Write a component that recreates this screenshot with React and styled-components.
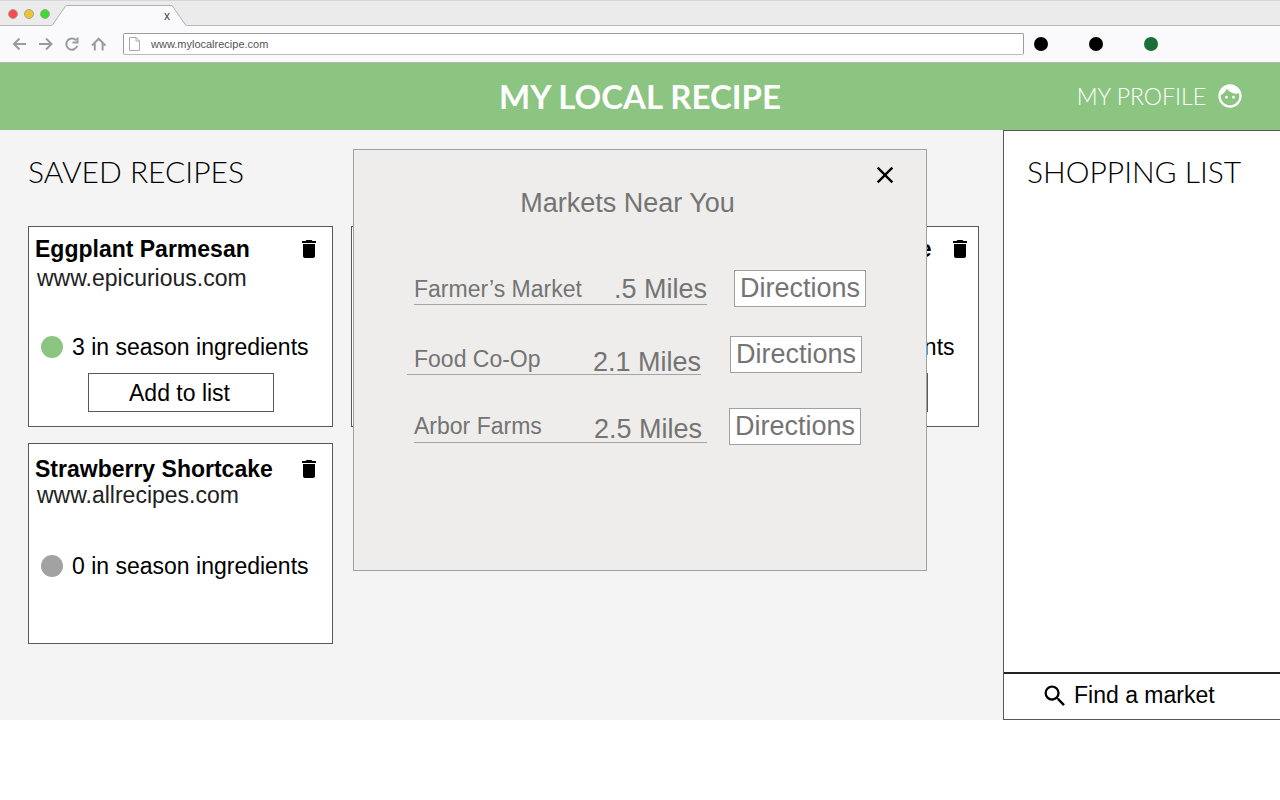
import React from "react";
import styled, { createGlobalStyle } from "styled-components";
import { MdClose, MdDelete, MdSearch } from "react-icons/md";

const GlobalStyle = createGlobalStyle`
  *, *::before, *::after { box-sizing: border-box; }
  body {
    margin: 0;
    background: #fff;
    color: #000;
    font-family: "Liberation Sans", Arial, sans-serif;
    font-size: 23px;
  }
  button, input { font: inherit; color: inherit; }
  h1, h2, h3, p, ul { margin: 0; padding: 0; }
`;

const PlainButton = styled.button`
  display: flex;
  align-items: center;
  justify-content: center;
  padding: 0;
  border: 0;
  background: none;
  cursor: pointer;
`;

/* Browser window */

const TabStrip = styled.div`
  display: flex;
  align-items: flex-end;
  height: 26px;
  padding-left: 8px;
  background: #ebebeb;
  border-top: 1px solid #d3d6da;
  box-shadow: inset 0 -1px #b9b9b9;
`;

const WindowButtons = styled.div`
  display: flex;
  gap: 6px;
  align-self: center;
  width: 44px;
`;

const WindowButton = styled.span`
  width: 10px;
  height: 10px;
  flex: none;
  border: 1px solid #a9a597;
  border-radius: 50%;
  background: ${(p) => p.$color};
`;

const Tab = styled.div`
  position: relative;
  display: flex;
  justify-content: flex-end;
  align-items: center;
  width: 134px;
  height: 21px;
  padding-right: 14px;
`;

const TabShape = styled.svg`
  position: absolute;
  inset: 0;
`;

const TabClose = styled(PlainButton)`
  position: relative;
  width: 10px;
  height: 20px;
  color: #444;
  font-size: 12px;
  line-height: 20px;
`;

const Toolbar = styled.div`
  display: flex;
  align-items: center;
  height: 37px;
  padding-left: 12px;
  background: #fafafc;
  border-bottom: 1px solid #b4b8b4;
`;

const NavButtons = styled.nav`
  display: flex;
  gap: 10px;
  width: 111px;
`;

const NavButton = styled(PlainButton)`
  width: 16px;
  height: 16px;
  color: #999c9c;
`;

const AddressBar = styled.label`
  display: flex;
  flex: 1;
  align-items: center;
  gap: 11px;
  height: 22px;
  padding-left: 5px;
  background: #fff;
  border: 1px solid #9c9c9f;
  border-bottom-color: #bbb;
  border-radius: 2px;
`;

const AddressInput = styled.input`
  flex: 1;
  min-width: 0;
  padding: 0;
  border: 0;
  outline: 0;
  background: none;
  color: #555;
  font-size: 11px;
  line-height: 20px;
`;

const Extensions = styled.div`
  display: flex;
  justify-content: space-between;
  width: 256px;
  padding: 0 122px 0 10px;
`;

const ExtensionDot = styled.span`
  width: 14px;
  height: 14px;
  border-radius: 50%;
  background: ${(p) => p.$color};
`;

/* Page */

const Header = styled.header`
  display: grid;
  grid-template-columns: 1fr auto 1fr;
  align-items: center;
  height: 67px;
  padding: 0 36px 1px;
  background: #8cc482;
  color: #fff;
  font-family: Lato, sans-serif;
`;

const SiteTitle = styled.h1`
  grid-column: 2;
  font-size: 33px;
  font-weight: 700;
  line-height: 40px;
`;

const ProfileLink = styled.a`
  display: flex;
  justify-self: end;
  align-items: center;
  gap: 10px;
  color: inherit;
  font-size: 23px;
  font-weight: 300;
  text-decoration: none;
`;

const Body = styled.div`
  position: relative;
  display: flex;
  min-height: 590px;
`;

const Recipes = styled.main`
  flex: 1;
  min-width: 0;
  padding: 23px 24px 76px 28px;
  background: #f4f4f4;
`;

const SectionTitle = styled.h2`
  font-family: Lato, sans-serif;
  font-size: 30px;
  font-weight: 300;
  line-height: 36px;
`;

const CardGrid = styled.div`
  display: grid;
  grid-template-columns: repeat(3, minmax(0, 1fr));
  gap: 16px 18px;
  margin-top: 37px;
`;

const Card = styled.article`
  min-height: 201px;
  padding: ${(p) => (p.$compact ? 11 : 8)}px 6px 14px;
  background: #fff;
  border: 1px solid #595959;
`;

const CardHead = styled.div`
  display: flex;
  justify-content: space-between;
  align-items: center;
  padding-right: ${(p) => (p.$wide ? 0 : 5)}px;
`;

const RecipeName = styled.h3`
  font-size: 23px;
  line-height: 28px;
  white-space: nowrap;
`;

const DeleteButton = styled(PlainButton)`
  width: 24px;
  height: 24px;
`;

const Source = styled.a`
  display: block;
  padding-left: 2px;
  color: #222;
  line-height: ${(p) => (p.$compact ? 24 : 30)}px;
  text-decoration: none;
`;

const Season = styled.p`
  display: flex;
  align-items: center;
  gap: 9px;
  margin-top: ${(p) => (p.$compact ? 45 : 40)}px;
  padding-left: 6px;
  line-height: 28px;
  white-space: nowrap;
`;

const SeasonDot = styled.span`
  flex: none;
  width: 22px;
  height: 22px;
  border-radius: 50%;
  background: ${(p) => (p.$active ? "#8cc482" : "#a2a2a2")};
`;

const AddButton = styled(PlainButton)`
  width: ${(p) => (p.$wide ? 203 : 186)}px;
  height: 39px;
  margin: 12px auto 0;
  padding: 2px 2px 0 0;
  background: #fff;
  border: 1px solid #595959;
`;

const Sidebar = styled.aside`
  display: flex;
  flex-direction: column;
  width: 277px;
  background: #fff;
  border: 1px solid #595959;
  border-right: 0;
`;

const ShoppingList = styled.section`
  flex: 1;
  padding: 22px 23px;
`;

const FindMarket = styled(PlainButton)`
  justify-content: flex-start;
  gap: 5px;
  height: 47px;
  padding: 0 0 2px 37px;
  border-top: 2px solid #222;
`;

/* Markets dialog */

const Overlay = styled.div`
  position: absolute;
  inset: 0;
  display: flex;
  justify-content: center;
  align-items: flex-start;
  padding-top: 19px;
`;

const Dialog = styled.section`
  width: 574px;
  min-height: 422px;
  padding: 11px 27px 32px 60px;
  background: #eeedeb;
  border: 1px solid #a0a0a0;
  color: #747474;
`;

const CloseButton = styled(PlainButton)`
  width: 28px;
  height: 28px;
  margin-left: auto;
  color: #000;
`;

const DialogTitle = styled.h2`
  padding-right: 58px;
  font-size: 27px;
  font-weight: 400;
  line-height: 28px;
  text-align: center;
`;

const MarketList = styled.ul`
  padding-top: 53px;
  list-style: none;
`;

const MarketRow = styled.li`
  display: flex;
  align-items: flex-start;
  gap: ${(p) => p.$gap}px;
  margin-left: ${(p) => (p.$outdent ? -7 : 0)}px;
  margin-bottom: ${(p) => p.$space}px;
`;

const MarketLine = styled.div`
  display: flex;
  justify-content: space-between;
  width: ${(p) => (p.$outdent ? 294 : 293)}px;
  height: ${(p) => (p.$outdent ? 39 : 35)}px;
  padding-left: ${(p) => (p.$outdent ? 7 : 0)}px;
  padding-top: ${(p) => p.$top}px;
  border-bottom: 1px solid #a4a4a4;
`;

const MarketName = styled.span`
  line-height: 28px;
`;

const Distance = styled.span`
  padding-right: ${(p) => (p.$inset ? 5 : 0)}px;
  font-size: 27px;
  line-height: ${(p) => (p.$low ? 34 : 28)}px;
`;

const Directions = styled(PlainButton)`
  width: 132px;
  height: 37px;
  background: #fff;
  border: 1px solid #a0a0a0;
  font-size: 27px;
  line-height: 35px;
`;

const recipes = [
  { name: "Eggplant Parmesan", source: "www.epicurious.com", count: 3 },
  { name: "Caprese Salad", source: "www.epicurious.com", count: 2 },
  { name: "Chocolate Cheesecake", source: "www.allrecipes.com", count: 1, wide: true },
  { name: "Strawberry Shortcake", source: "www.allrecipes.com", count: 0, compact: true },
];

const markets = [
  { name: "Farmer’s Market", distance: ".5 Miles", top: 5, gap: 27, space: 29 },
  { name: "Food Co-Op", distance: "2.1 Miles", top: 9, gap: 29, space: 33, outdent: true, low: true },
  { name: "Arbor Farms", distance: "2.5 Miles", top: 4, gap: 22, space: 0, inset: true, low: true },
];

function FaceIcon() {
  return (
    <svg width="28" height="28" viewBox="0 0 24 24" fill="currentColor" aria-hidden="true">
      <path d="M9 11.75c-.69 0-1.25.56-1.25 1.25s.56 1.25 1.25 1.25 1.25-.56 1.25-1.25-.56-1.25-1.25-1.25zm6 0c-.69 0-1.25.56-1.25 1.25s.56 1.25 1.25 1.25 1.25-.56 1.25-1.25-.56-1.25-1.25-1.25zM12 2C6.48 2 2 6.48 2 12s4.48 10 10 10 10-4.48 10-10S17.52 2 12 2zm0 18c-4.41 0-8-3.59-8-8 0-.29.02-.58.05-.86 2.36-1.05 4.23-2.98 5.21-5.37C11.07 8.33 14.05 10 17.42 10c.78 0 1.53-.09 2.25-.26.21.71.33 1.47.33 2.26 0 4.41-3.59 8-8 8z" />
    </svg>
  );
}

function BrowserChrome() {
  return (
    <>
      <TabStrip>
        <WindowButtons>
          <WindowButton $color="#fc4a4c" />
          <WindowButton $color="#f0c42a" />
          <WindowButton $color="#3bdc2c" />
        </WindowButtons>
        <Tab>
          <TabShape width="134" height="21" viewBox="0 0 134 21" aria-hidden="true">
            <path d="M0 20.5 L14 0.5 H120 L134 20.5 V21 H0Z" fill="#fafafc" />
            <path d="M0 20.5 L14 0.5 H120 L134 20.5" fill="none" stroke="#b0b0b0" />
          </TabShape>
          <TabClose aria-label="Close tab">x</TabClose>
        </Tab>
      </TabStrip>
      <Toolbar>
        <NavButtons aria-label="Browser">
          <NavButton aria-label="Back">
            <svg width="16" height="16" viewBox="0 0 16 16" fill="none" stroke="currentColor" strokeWidth="2">
              <path d="M14 8H2.5M7.5 2.5 2 8 7.5 13.5" />
            </svg>
          </NavButton>
          <NavButton aria-label="Forward">
            <svg width="16" height="16" viewBox="0 0 16 16" fill="none" stroke="currentColor" strokeWidth="2">
              <path d="M1 8h12M8 2.5 13.5 8 8 13.5" />
            </svg>
          </NavButton>
          <NavButton aria-label="Reload">
            <svg width="16" height="16" viewBox="0 0 16 16" fill="none" stroke="currentColor" strokeWidth="2">
              <path d="M12 4.2A5.6 5.6 0 1 0 13.3 9.8M13.5 1.5V6.5H8.5" />
            </svg>
          </NavButton>
          <NavButton aria-label="Home">
            <svg width="16" height="16" viewBox="0 0 16 16" fill="none" stroke="currentColor" strokeWidth="2">
              <path d="M2 9.5 8.7 2.7 15.4 9.5M4.8 7V14.5M12.6 7V14.5" />
            </svg>
          </NavButton>
        </NavButtons>
        <AddressBar>
          <svg width="11" height="14" viewBox="0 0 11 14" fill="#fff" stroke="#aaa" aria-hidden="true">
            <path d="M.5.5H7L10.5 4V13.5H.5ZM7 .5V4H10.5" />
          </svg>
          <AddressInput aria-label="Address" defaultValue="www.mylocalrecipe.com" />
        </AddressBar>
        <Extensions>
          <ExtensionDot $color="#000" />
          <ExtensionDot $color="#000" />
          <ExtensionDot $color="#1b6e37" />
        </Extensions>
      </Toolbar>
    </>
  );
}

function RecipeCard({ name, source, count, wide, compact }) {
  return (
    <Card $compact={compact}>
      <CardHead $wide={wide}>
        <RecipeName>{name}</RecipeName>
        <DeleteButton aria-label={`Delete ${name}`}>
          <MdDelete size={24} />
        </DeleteButton>
      </CardHead>
      <Source href="#" $compact={compact}>{source}</Source>
      <Season $compact={compact}>
        <SeasonDot $active={count > 0} />
        {count} in season ingredients
      </Season>
      {count > 0 && <AddButton $wide={wide}>Add to list</AddButton>}
    </Card>
  );
}

function MarketsDialog() {
  return (
    <Overlay>
      <Dialog role="dialog" aria-labelledby="markets-title">
        <CloseButton aria-label="Close">
          <MdClose size={28} />
        </CloseButton>
        <DialogTitle id="markets-title">Markets Near You</DialogTitle>
        <MarketList>
          {markets.map((m) => (
            <MarketRow key={m.name} $gap={m.gap} $space={m.space} $outdent={m.outdent}>
              <MarketLine $outdent={m.outdent} $top={m.top}>
                <MarketName>{m.name}</MarketName>
                <Distance $low={m.low} $inset={m.inset}>{m.distance}</Distance>
              </MarketLine>
              <Directions>Directions</Directions>
            </MarketRow>
          ))}
        </MarketList>
      </Dialog>
    </Overlay>
  );
}

export default function App() {
  return (
    <>
      <GlobalStyle />
      <BrowserChrome />
      <Header>
        <SiteTitle>MY LOCAL RECIPE</SiteTitle>
        <ProfileLink href="#">
          MY PROFILE
          <FaceIcon />
        </ProfileLink>
      </Header>
      <Body>
        <Recipes>
          <SectionTitle>SAVED RECIPES</SectionTitle>
          <CardGrid>
            {recipes.map((r) => (
              <RecipeCard key={r.name} {...r} />
            ))}
          </CardGrid>
        </Recipes>
        <Sidebar>
          <ShoppingList>
            <SectionTitle>SHOPPING LIST</SectionTitle>
          </ShoppingList>
          <FindMarket>
            <MdSearch size={28} />
            Find a market
          </FindMarket>
        </Sidebar>
        <MarketsDialog />
      </Body>
    </>
  );
}
